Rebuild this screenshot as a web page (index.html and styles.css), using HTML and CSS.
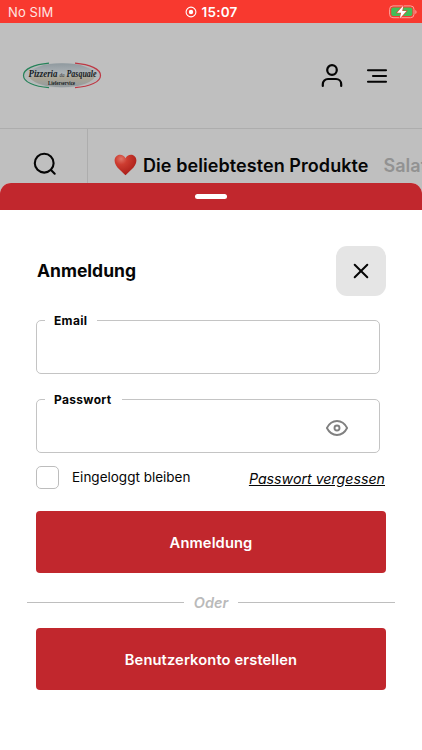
FILE: index.html
```html
<!DOCTYPE html>
<html lang="de">
<head>
<meta charset="utf-8">
<title>Anmeldung</title>
<link rel="stylesheet" href="styles.css">
</head>
<body>
<div class="status">
  <span class="carrier">No SIM</span>
  <div class="clock">
    <svg width="12" height="12" viewBox="0 0 12 12"><circle cx="6" cy="6" r="4.9" fill="none" stroke="#fff" stroke-width="1.1"/><circle cx="6" cy="6" r="2.2" fill="#fff"/></svg>
    <span>15:07</span>
  </div>
  <svg class="battery" width="28" height="14" viewBox="0 0 28 14"><rect x=".6" y=".9" width="24.4" height="11.8" rx="3.4" fill="none" stroke="#fca39c"/><rect x="2.2" y="2.5" width="21.2" height="8.6" rx="2" fill="#43bd58"/><path d="M26.3 5v4q1.3-.6 1.3-2t-1.3-2z" fill="#fca39c"/><path d="M14.4.6 8 7.7h4.1L10.8 13.4 17.5 6h-4.3z" fill="#fff" stroke="#f5392f" stroke-width="1.1" paint-order="stroke"/></svg>
</div>
<header class="top">
  <svg class="logo" width="80" height="27" viewBox="0 0 80 27">
    <defs><linearGradient id="sky" x1="0" y1="0" x2="0" y2="1"><stop offset="0" stop-color="#8f999f"/><stop offset=".42" stop-color="#adb3b6"/><stop offset=".62" stop-color="#aaa494"/><stop offset="1" stop-color="#939ba0"/></linearGradient></defs>
    <ellipse cx="40" cy="13.4" rx="38" ry="12.3" fill="#b5b8b9"/>
    <ellipse cx="40" cy="13.2" rx="33" ry="12" fill="url(#sky)"/>
    <path d="M27 1.2C12 2.5 1.5 7 1.5 13.4S12 24.5 27 25.6" fill="none" stroke="#26825a" stroke-width="1.2"/>
    <path d="M53 1.2C68 2.5 78.5 7 78.5 13.4S68 24.5 53 25.6" fill="none" stroke="#bd3844" stroke-width="1.2"/>
    <text class="brand" x="6.500" y="15.4" textLength="29" lengthAdjust="spacingAndGlyphs">Pizzeria</text>
    <text class="brand-small" x="37.500" y="15.3" textLength="5" lengthAdjust="spacingAndGlyphs">da</text>
    <text class="brand" x="44.500" y="15.4" textLength="30" lengthAdjust="spacingAndGlyphs">Pasquale</text>
    <text class="brand-sub" x="26" y="23.1" textLength="27" lengthAdjust="spacingAndGlyphs">Lieferservice</text>
  </svg>
  <svg class="user" width="24" height="26" viewBox="0 0 24 26" fill="none" stroke="#050505" stroke-width="2.2" stroke-linecap="round"><circle cx="12" cy="7" r="4.8"/><path d="M2.800 23v-1.800A5.2 5.2 0 0 1 8 16h8a5.2 5.2 0 0 1 5.2 5.2V23"/></svg>
  <svg class="menu" width="22" height="16" viewBox="0 0 22 16" stroke="#050505" stroke-width="2.1" stroke-linecap="round"><path d="M2 2.3h18M7 8h13M2 13.7h18"/></svg>
</header>
<nav class="categories">
  <div class="search">
    <svg width="24" height="24" viewBox="0 0 24 24" fill="none" stroke="#050505" stroke-width="2.1" stroke-linecap="round"><circle cx="11.2" cy="11.2" r="9.4"/><path d="m18 18 3.7 3.7"/></svg>
  </div>
  <div class="tabs">
    <svg class="heart" width="23" height="22" viewBox="0 0 23 22"><defs><radialGradient id="red" cx=".3" cy=".2" r=".8"><stop offset="0" stop-color="#df7467"/><stop offset=".35" stop-color="#cd3c30"/><stop offset="1" stop-color="#aa1e19"/></radialGradient></defs><path d="M11.5 21.3C9.3 18.3.6 13.2.6 6.7.6 3.3 3 .8 6 .8c2.5 0 4.5 1.3 5.5 3.4C12.500 2.100 14.500.8 17 .8c3 0 5.400 2.500 5.400 5.900 0 6.500-8.700 11.600-10.900 14.600z" fill="url(#red)"/></svg>
    <span class="tab-active">Die beliebtesten Produkte</span>
    <span class="tab">Salate</span>
  </div>
</nav>
<main class="sheet">
  <div class="handle"><i></i></div>
  <div class="content">
    <div class="title-row">
      <h1>Anmeldung</h1>
      <button class="close" aria-label="Schließen"><svg width="16" height="16" viewBox="0 0 16 16" stroke="#050505" stroke-width="2" stroke-linecap="round"><path d="m1.700 1.700 12.600 12.600M14.300 1.700 1.700 14.300"/></svg></button>
    </div>
    <div class="field"><label class="label">Email</label></div>
    <div class="field second"><label class="label">Passwort</label>
      <svg class="eye" width="24" height="18" viewBox="0 0 24 18" fill="none" stroke="#808080" stroke-width="1.900"><path d="M1.900 9C4.200 4.500 7.700 2 12 2s7.800 2.500 10.100 7C19.800 13.500 16.300 16 12 16S4.200 13.500 1.900 9z" stroke-linejoin="round"/><circle cx="12" cy="9" r="2.500"/></svg>
    </div>
    <div class="options">
      <span class="check"></span><span class="stay">Eingeloggt bleiben</span><a class="forgot">Passwort vergessen</a>
    </div>
    <button class="primary"><span class="login">Anmeldung</span></button>
    <div class="divider"><span>Oder</span></div>
    <button class="primary"><span class="create">Benutzerkonto erstellen</span></button>
  </div>
</main>
</body>
</html>
```
FILE: styles.css
```css
* { box-sizing: border-box; }
body {
  position: relative;
  margin: 0;
  height: 750px;
  overflow: hidden;
  background: #bfbfbf;
  color: #060606;
  font-family: Inter, "Liberation Sans", sans-serif;
}
svg { display: block; flex: none; }
button { border: 0; padding: 0; font-family: inherit; }

.status {
  display: grid;
  grid-template-columns: 1fr auto 1fr;
  align-items: center;
  height: 23px;
  padding: 0 5px 0 8px;
  background: #f8392f;
  color: #fff;
}
.carrier { font-size: 13px; color: #ffe4e1; padding-top: 1px; letter-spacing: .1px; }
.clock { display: flex; align-items: center; gap: 5px; margin-right: 3px; font-size: 13.5px; font-weight: 600; padding-top: 1px; letter-spacing: .2px; }
.battery { justify-self: end; }

.top { display: flex; align-items: center; height: 105px; padding: 0 34px 0 22px; }
.user { margin-left: auto; }
.menu { margin-left: 22px; }
.brand { font: italic bold 10px "Liberation Serif", serif; fill: #171b1e; }
.brand-small { font: italic 6px "Liberation Serif", serif; fill: #34393c; }
.brand-sub { font: bold 5.800px "Liberation Serif", serif; fill: #171b1e; }

.categories { display: flex; height: 72px; border-top: 1px solid #adadad; }
.search { width: 88px; padding: 23px 0 0 33px; border-right: 1px solid #adadad; }
.tabs { display: flex; align-items: center; flex: 1; min-width: 0; overflow: hidden; padding-left: 26px; white-space: nowrap; font-size: 18px; font-weight: 600; }
.tab-active { margin-left: 6px; padding-top: 2px; letter-spacing: .07px; }
.tab { margin-left: 15px; padding-top: 2px; color: #929292; }

.sheet { position: absolute; top: 183px; left: 0; right: 0; bottom: 0; border-radius: 11px 11px 0 0; overflow: hidden; background: #fff; }
.handle { display: flex; justify-content: center; height: 27px; padding-top: 11px; background: #c1272d; }
.handle i { width: 32px; height: 5px; border-radius: 3px; background: #fff; }
.content { padding: 36px 36px 0; }
.title-row { display: flex; align-items: center; justify-content: space-between; height: 50px; }
h1 { margin: 0 0 1px 1px; font-size: 17.500px; font-weight: 700; }
.close { display: grid; place-items: center; width: 50px; height: 50px; border-radius: 11px; background: #e5e5e5; }
.field { position: relative; display: flex; align-items: center; justify-content: flex-end; width: 344px; height: 54px; margin-top: 24px; padding-right: 30px; border: 1px solid #c4c4c4; border-radius: 5px; }
.second { margin-top: 25px; }
.eye { margin-top: 4px; }
.label { position: absolute; top: -9px; left: 8px; padding: 0 10px 0 9px; background: #fff; font-size: 12px; line-height: 17px; font-weight: 700; letter-spacing: .32px; }
.options { display: flex; align-items: center; height: 24px; margin-top: 12px; }
.check { width: 23px; height: 23px; border: 1px solid #bdbdbd; border-radius: 5px; }
.stay { margin-left: 13px; font-size: 13.500px; }
.forgot { margin: 0 1px 0 auto; padding-top: 2px; font-size: 14.200px; font-style: italic; text-decoration: underline; }
.primary { display: grid; place-items: center; width: 350px; height: 62px; border-radius: 4px; background: #c1272d; color: #fff; font-size: 14.700px; font-weight: 600; letter-spacing: .12px; }
.primary span { padding-top: 1px; }
.options + .primary { margin-top: 22px; }
.divider { display: flex; align-items: center; gap: 10px; height: 55px; margin: 0 -9px; padding-top: 4px; color: #bababa; font-size: 14.500px; font-style: italic; font-weight: 600; }
.divider::before, .divider::after { content: ""; flex: 1; height: 1px; background: #bebebe; }
```
